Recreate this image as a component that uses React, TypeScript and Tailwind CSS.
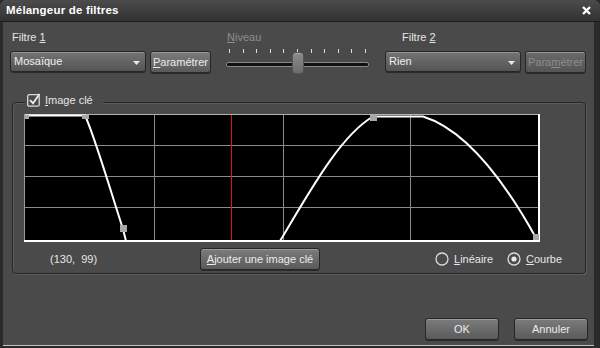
import React from "react";

function Btn({ children, className = "", disabled = false }: { children: React.ReactNode; className?: string; disabled?: boolean }) {
  return (
    <div
      className={
        "flex items-center justify-center rounded-[3px] border border-[#262626] shadow-[inset_0_1px_0_#9a9a9a,0_1px_0_#2a2a2a] " +
        (disabled
          ? "bg-gradient-to-b from-[#6a6a6a] to-[#555555] text-[#8c8c8c] "
          : "bg-gradient-to-b from-[#7c7c7c] to-[#5a5a5a] text-[#ececec] ") +
        className
      }
    >
      {children}
    </div>
  );
}

function Combo({ label }: { label: string }) {
  return (
    <div className="relative flex items-center w-[136px] h-[21px] rounded-[3px] border border-[#262626] bg-gradient-to-b from-[#747474] to-[#545454] shadow-[inset_0_1px_0_#959595,0_1px_0_#2a2a2a] pl-[3px] text-[#f0f0f0]">
      {label}
      <svg className="absolute right-[5px] top-[9px]" width="7" height="4" viewBox="0 0 7 4">
        <path d="M0 0 H7 L3.5 4 Z" fill="#e8e8e8" />
      </svg>
    </div>
  );
}

function Graph() {
  return (
    <svg width="516" height="128" viewBox="0 0 516 128" className="block">
      <rect x="0" y="0" width="516" height="128" fill="#000" />
      <g stroke="#8a8a8a" strokeWidth="1">
        <line x1="0" y1="31.5" x2="516" y2="31.5" />
        <line x1="0" y1="62.5" x2="516" y2="62.5" />
        <line x1="0" y1="93.5" x2="516" y2="93.5" />
        <line x1="130.5" y1="0" x2="130.5" y2="128" />
        <line x1="259.5" y1="0" x2="259.5" y2="128" />
        <line x1="386.5" y1="0" x2="386.5" y2="128" />
      </g>
      <line x1="207.5" y1="0" x2="207.5" y2="128" stroke="#d01818" strokeWidth="1" />
      <line x1="0" y1="0.5" x2="516" y2="0.5" stroke="#b4b4a4" />
      <line x1="0.5" y1="0" x2="0.5" y2="128" stroke="#9a9a90" />
      <line x1="515" y1="0" x2="515" y2="128" stroke="#ffffff" strokeWidth="2" />
      <line x1="0" y1="127" x2="516" y2="127" stroke="#ffffff" strokeWidth="2" />
      <path
        d="M1 1.5 H61 C70 20 90 88 99 115 L102 127 H256 C286 77 316 22 349 2.5 H399 C446 17 486 77 512 124"
        fill="none"
        stroke="#ffffff"
        strokeWidth="2"
      />
      <g fill="#a8a8a8">
        <rect x="1" y="1" width="4" height="4" />
        <rect x="58" y="1" width="7" height="4" />
        <rect x="96" y="111" width="7" height="7" />
        <rect x="346" y="1" width="7" height="6" />
        <rect x="509" y="120" width="6" height="6" />
      </g>
    </svg>
  );
}

function Radio({ checked }: { checked?: boolean }) {
  return (
    <svg width="14" height="14" viewBox="0 0 14 14" className="shrink-0">
      <circle cx="7" cy="7" r="6" fill="none" stroke="#dcdcdc" strokeWidth="1.3" />
      {checked && <circle cx="7" cy="7" r="2.6" fill="#e8e8e8" />}
    </svg>
  );
}

export default function App() {
  return (
    <div className="w-[600px] h-[348px] bg-[#2a2a2a] flex flex-col overflow-hidden text-[11px] text-[#e6e6e6] font-['Liberation_Sans',Arial,sans-serif] leading-none">
      <div className="h-[22px] shrink-0 flex items-center justify-between pl-[6px] pr-[9px] rounded-t-[6px] bg-gradient-to-b from-[#4c4c4c] to-[#323232] border-b border-[#1c1c1c]">
        <span className="font-bold text-[11.5px] text-white tracking-[0.2px]">Mélangeur de filtres</span>
        <svg width="9" height="9" viewBox="0 0 9 9">
          <path d="M1 1 L8 8 M8 1 L1 8" stroke="#ffffff" strokeWidth="2.4" />
        </svg>
      </div>
      <div className="flex-1 flex pl-[3px] pr-[6px] pb-[2px]">
        <div className="flex-1 flex flex-col bg-[#4a4a4a] border-b border-[#c4c4c4]">
          <div className="flex pt-[8px] pl-[7px]">
            <div className="flex flex-col">
              <div className="h-[14px] flex items-center pl-[2px]">
                Filtre <span className="underline ml-[3px]">1</span>
              </div>
              <div className="mt-[7px] flex gap-[4px]">
                <Combo label="Mosaïque" />
                <Btn className="w-[61px] h-[22px]">
                  <span><span className="underline">P</span>aramétrer</span>
                </Btn>
              </div>
            </div>
            <div className="ml-[15px] w-[143px] flex flex-col">
              <div className="h-[14px] flex items-center pl-[1px] text-[#8e8e8e]">
                <span><span className="underline">N</span>iveau</span>
              </div>
              <div className="relative h-[24px] mt-[5px]">
                <div className="flex justify-between px-[3px]">
                  {Array.from({ length: 11 }).map((_, i) => (
                    <div key={i} className="w-[1px] h-[4px] bg-[#dcdcdc]" />
                  ))}
                </div>
                <div className="mt-[9px] h-[5px] rounded-[2px] bg-[#111] border border-[#8a8a8a]" />
                <div className="absolute left-[66px] top-[3px] w-[12px] h-[22px] rounded-[4px] bg-gradient-to-b from-[#8c8c8c] to-[#6c6c6c] border border-[#555] shadow-[inset_0_1px_0_#a8a8a8]" />
              </div>
            </div>
            <div className="ml-[16px] flex flex-col">
              <div className="h-[14px] flex items-center pl-[17px]">
                Filtre <span className="underline ml-[3px]">2</span>
              </div>
              <div className="mt-[7px] flex gap-[4px]">
                <Combo label="Rien" />
                <Btn disabled className="w-[61px] h-[22px]">
                  <span>Para<span className="underline">m</span>étrer</span>
                </Btn>
              </div>
            </div>
          </div>
          <div className="relative ml-[9px] mt-[29px] w-[574px] h-[172px] rounded-[4px] border border-[#262626] shadow-[inset_1px_1px_0_#5c5c5c,1px_1px_0_#5c5c5c] pt-[11px] pl-[11px]">
            <div className="absolute left-[12px] top-[-10px] flex items-center gap-[4px] bg-[#4a4a4a] px-[2px] h-[14px]">
              <svg width="14" height="14" viewBox="0 0 14 14">
                <rect x="0.7" y="1.7" width="11.5" height="11.5" rx="1.5" fill="none" stroke="#dcdcdc" strokeWidth="1.3" />
                <path d="M3 7 L6 10.3 L12.5 1" fill="none" stroke="#eeeeee" strokeWidth="1.8" />
              </svg>
              <span className="pr-[8px]"><span className="underline">I</span>mage clé</span>
            </div>
            <Graph />
            <div className="mt-[6px] flex items-center h-[22px]">
              <div className="w-[176px] pl-[26px] whitespace-pre">(130,  99)</div>
              <Btn className="w-[120px] h-[22px]">
                <span><span className="underline">A</span>jouter une image clé</span>
              </Btn>
              <div className="ml-[115px] flex items-center">
                <div className="w-[72px] flex items-center gap-[5px]">
                  <Radio />
                  <span><span className="underline">L</span>inéaire</span>
                </div>
                <div className="flex items-center gap-[5px]">
                  <Radio checked />
                  <span><span className="underline">C</span>ourbe</span>
                </div>
              </div>
            </div>
          </div>
          <div className="mt-[44px] flex justify-end gap-[15px] pr-[6px]">
            <Btn className="w-[74px] h-[22px]">OK</Btn>
            <Btn className="w-[74px] h-[22px]">Annuler</Btn>
          </div>
        </div>
      </div>
    </div>
  );
}
